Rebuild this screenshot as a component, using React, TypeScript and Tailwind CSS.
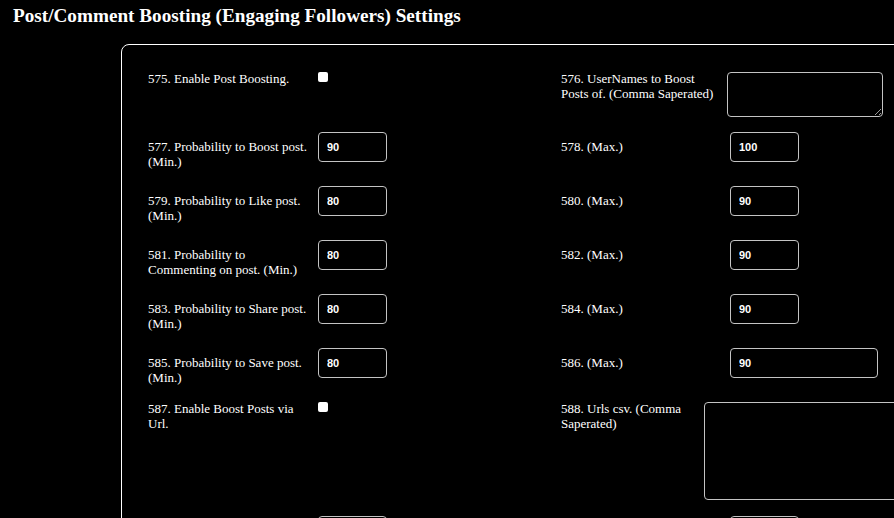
import React from 'react';

const serif = { fontFamily: '"Liberation Serif", "Times New Roman", serif' };

const Checkbox: React.FC = () => (
  <div className="h-[10px] w-[10px] rounded-[2px] bg-white" />
);

const NumInput: React.FC<{ value: string; wide?: boolean }> = ({ value, wide }) => (
  <input
    type="text"
    defaultValue={value}
    className={`${wide ? 'w-[148px]' : 'w-[69px]'} h-[30px] rounded-[4px] border border-[#c4c4c4] bg-black px-[8px] text-[11px] font-bold text-white outline-none`}
    style={{ fontFamily: '"Liberation Sans", Arial, sans-serif' }}
  />
);

interface NumRowProps {
  left: string;
  leftValue: string;
  right: string;
  rightValue: string;
  wideRight?: boolean;
}

const NumRow: React.FC<NumRowProps> = ({ left, leftValue, right, rightValue, wideRight }) => (
  <div className="flex h-[54px] items-start">
    <div className="flex w-[413px] items-start">
      <div className="w-[170px] pr-[6px] pt-[7px]">{left}</div>
      <NumInput value={leftValue} />
    </div>
    <div className="flex items-start">
      <div className="w-[169px] pr-[6px] pt-[7px]">{right}</div>
      <NumInput value={rightValue} wide={wideRight} />
    </div>
  </div>
);

const App: React.FC = () => {
  return (
    <div className="h-[518px] w-[894px] overflow-hidden bg-black text-white" style={serif}>
      <div className="pl-[13px] pt-[5px] text-[19.2px] font-bold leading-[22px]">
        Post/Comment Boosting (Engaging Followers) Settings
      </div>

      <div className="ml-[121px] mt-[17px] w-[820px] rounded-[8px] border border-white pl-[26px] pt-[27px] text-[13px] leading-[15px]">
        {/* 575 / 576 */}
        <div className="flex h-[60px] items-start">
          <div className="flex w-[413px] items-start">
            <div className="mt-[-1px] w-[170px] pr-[6px]">575. Enable Post Boosting.</div>
            <Checkbox />
          </div>
          <div className="flex items-start">
            <div className="mt-[-1px] w-[166px] pr-[6px]">576. UserNames to Boost Posts of. (Comma Saperated)</div>
            <textarea className="h-[45px] w-[156px] rounded-[4px] border border-[#c4c4c4] bg-black text-white outline-none" />
          </div>
        </div>

        <NumRow left="577. Probability to Boost post. (Min.)" leftValue="90" right="578. (Max.)" rightValue="100" />
        <NumRow left="579. Probability to Like post. (Min.)" leftValue="80" right="580. (Max.)" rightValue="90" />
        <NumRow left="581. Probability to Commenting on post. (Min.)" leftValue="80" right="582. (Max.)" rightValue="90" />
        <NumRow left="583. Probability to Share post. (Min.)" leftValue="80" right="584. (Max.)" rightValue="90" />
        <NumRow left="585. Probability to Save post. (Min.)" leftValue="80" right="586. (Max.)" rightValue="90" wideRight />

        {/* 587 / 588 */}
        <div className="flex h-[114px] items-start">
          <div className="flex w-[413px] items-start">
            <div className="mt-[-1px] w-[170px] pr-[6px]">587. Enable Boost Posts via Url.</div>
            <Checkbox />
          </div>
          <div className="flex items-start">
            <div className="mt-[-1px] w-[143px] pr-[6px]">588. Urls csv. (Comma Saperated)</div>
            <textarea className="h-[98px] w-[230px] rounded-[4px] border border-[#c4c4c4] bg-black text-white outline-none" />
          </div>
        </div>

        {/* next row, only the top of its inputs is in view */}
        <div className="flex h-[54px] items-start">
          <div className="flex w-[413px] items-start">
            <div className="w-[170px]" />
            <NumInput value="" />
          </div>
          <div className="flex items-start">
            <div className="w-[169px]" />
            <NumInput value="" />
          </div>
        </div>
      </div>
    </div>
  );
};

export default App;
